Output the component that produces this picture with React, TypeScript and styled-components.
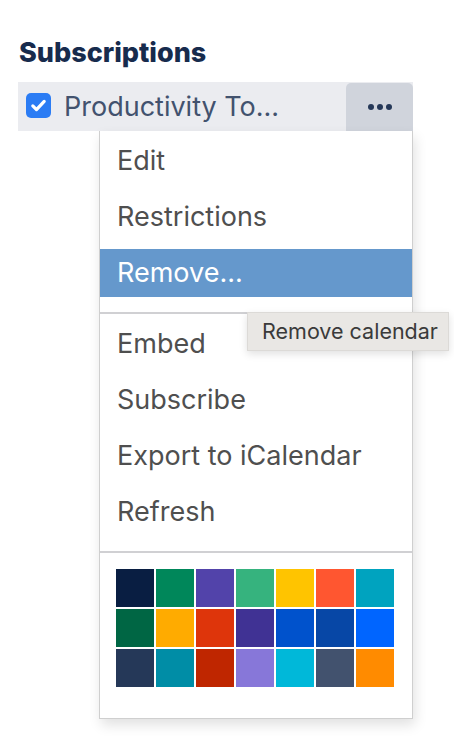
import styled, { createGlobalStyle } from 'styled-components';

const colors = [
	'#091E42', '#00875A', '#5243AA', '#36B37E', '#FFC400', '#FF5630', '#00A3BF',
	'#006644', '#FFAB00', '#DE350B', '#403294', '#0052CC', '#0747A6', '#0065FF',
	'#253858', '#008DA6', '#BF2600', '#8777D9', '#00B8D9', '#42526E', '#FF8B00',
];

const topItems = ['Edit', 'Restrictions', 'Remove...'];
const bottomItems = ['Embed', 'Subscribe', 'Export to iCalendar', 'Refresh'];

const App: React.FC = () => {
	return (
		<Page>
			<GlobalStyle />
			<Title>Subscriptions</Title>
			<CalendarWrap>
				<CalendarRow>
					<CheckBox>
						<svg width='19' height='19' viewBox='0 0 16 16'>
							<path d='M3.2 8.4l3.1 3.1L12.8 4.6' fill='none' stroke='#fff' strokeWidth='2.7' strokeLinecap='round' strokeLinejoin='round' />
						</svg>
					</CheckBox>
					<CalendarName>Productivity To...</CalendarName>
					<MoreButton>
						<Dot />
						<Dot />
						<Dot />
					</MoreButton>
				</CalendarRow>

				<Menu>
					<MenuSection>
						{topItems.map(item => (
							<MenuItem key={item} $active={item === 'Remove...'}>
								{item}
							</MenuItem>
						))}
					</MenuSection>
					<MenuSection>
						{bottomItems.map(item => (
							<MenuItem key={item}>{item}</MenuItem>
						))}
					</MenuSection>
					<ColorSection>
						<ColorGrid>
							{colors.map(c => (
								<Swatch key={c} $color={c} />
							))}
						</ColorGrid>
					</ColorSection>
				</Menu>

				<Tooltip>Remove calendar</Tooltip>
			</CalendarWrap>
		</Page>
	);
};

//Styled Component
const GlobalStyle = createGlobalStyle`
	body {
		margin: 0;
		background: #ffffff;
		font-family: Inter, 'Liberation Sans', sans-serif;
	}
`;

const Page = styled.div`
	width: 454px;
	height: 740px;
	padding: 38px 0 0 18px;
	box-sizing: border-box;
	overflow: hidden;
`;

const Title = styled.h2`
	margin: 0 0 14px 1px;
	font-size: 27px;
	line-height: 30px;
	font-weight: 800;
	color: #172b4d;
`;

const CalendarWrap = styled.div`
	position: relative;
	width: 395px;
`;

const CalendarRow = styled.div`
	display: flex;
	align-items: center;
	height: 49px;
	padding-left: 8px;
	background-color: #ebecf0;
`;

const CheckBox = styled.div`
	width: 25px;
	height: 25px;
	border-radius: 5px;
	background-color: #2b7cf4;
	display: flex;
	align-items: center;
	justify-content: center;
	margin-top: -2px;
`;

const CalendarName = styled.div`
	margin-left: 13px;
	font-size: 27px;
	color: #42526e;
	white-space: nowrap;
`;

const MoreButton = styled.div`
	margin-left: auto;
	align-self: flex-end;
	width: 67px;
	height: 48px;
	border-radius: 5px 5px 0 0;
	background-color: #d0d4dc;
	display: flex;
	align-items: center;
	justify-content: center;
	gap: 3px;
`;

const Dot = styled.span`
	width: 6px;
	height: 6px;
	border-radius: 50%;
	background-color: #253858;
`;

const Menu = styled.div`
	position: absolute;
	top: 49px;
	left: 81px;
	width: 314px;
	height: 588px;
	box-sizing: border-box;
	background-color: #ffffff;
	border: 1px solid #cfcfcf;
	border-top: none;
	box-shadow: 2px 6px 12px rgba(0, 0, 0, 0.12);
`;

const MenuSection = styled.div`
	display: flex;
	flex-direction: column;
	gap: 8px;
	padding: 6px 0 15px;
	border-bottom: 2px solid #d0d0d3;
`;

const MenuItem = styled.div<{ $active?: boolean }>`
	height: 48px;
	line-height: 48px;
	padding-left: 17px;
	font-size: 27px;
	color: ${p => (p.$active ? '#ffffff' : '#4f4f4f')};
	background-color: ${p => (p.$active ? '#6598cc' : 'transparent')};
`;

const ColorSection = styled.div`
	padding: 16px 0 0 16px;
`;

const ColorGrid = styled.div`
	display: grid;
	grid-template-columns: repeat(7, 38px);
	grid-auto-rows: 38px;
	gap: 2px;
`;

const Swatch = styled.div<{ $color: string }>`
	background-color: ${p => p.$color};
`;

const Tooltip = styled.div`
	position: absolute;
	top: 230px;
	left: 229px;
	height: 37px;
	padding: 0 10px 0 14px;
	line-height: 37px;
	font-size: 21.5px;
	color: #3a3a3a;
	background-color: #e9e7e4;
	border: 1px solid #dcdad7;
	box-shadow: 0 3px 8px rgba(0, 0, 0, 0.12);
	white-space: nowrap;
`;

export default App;
